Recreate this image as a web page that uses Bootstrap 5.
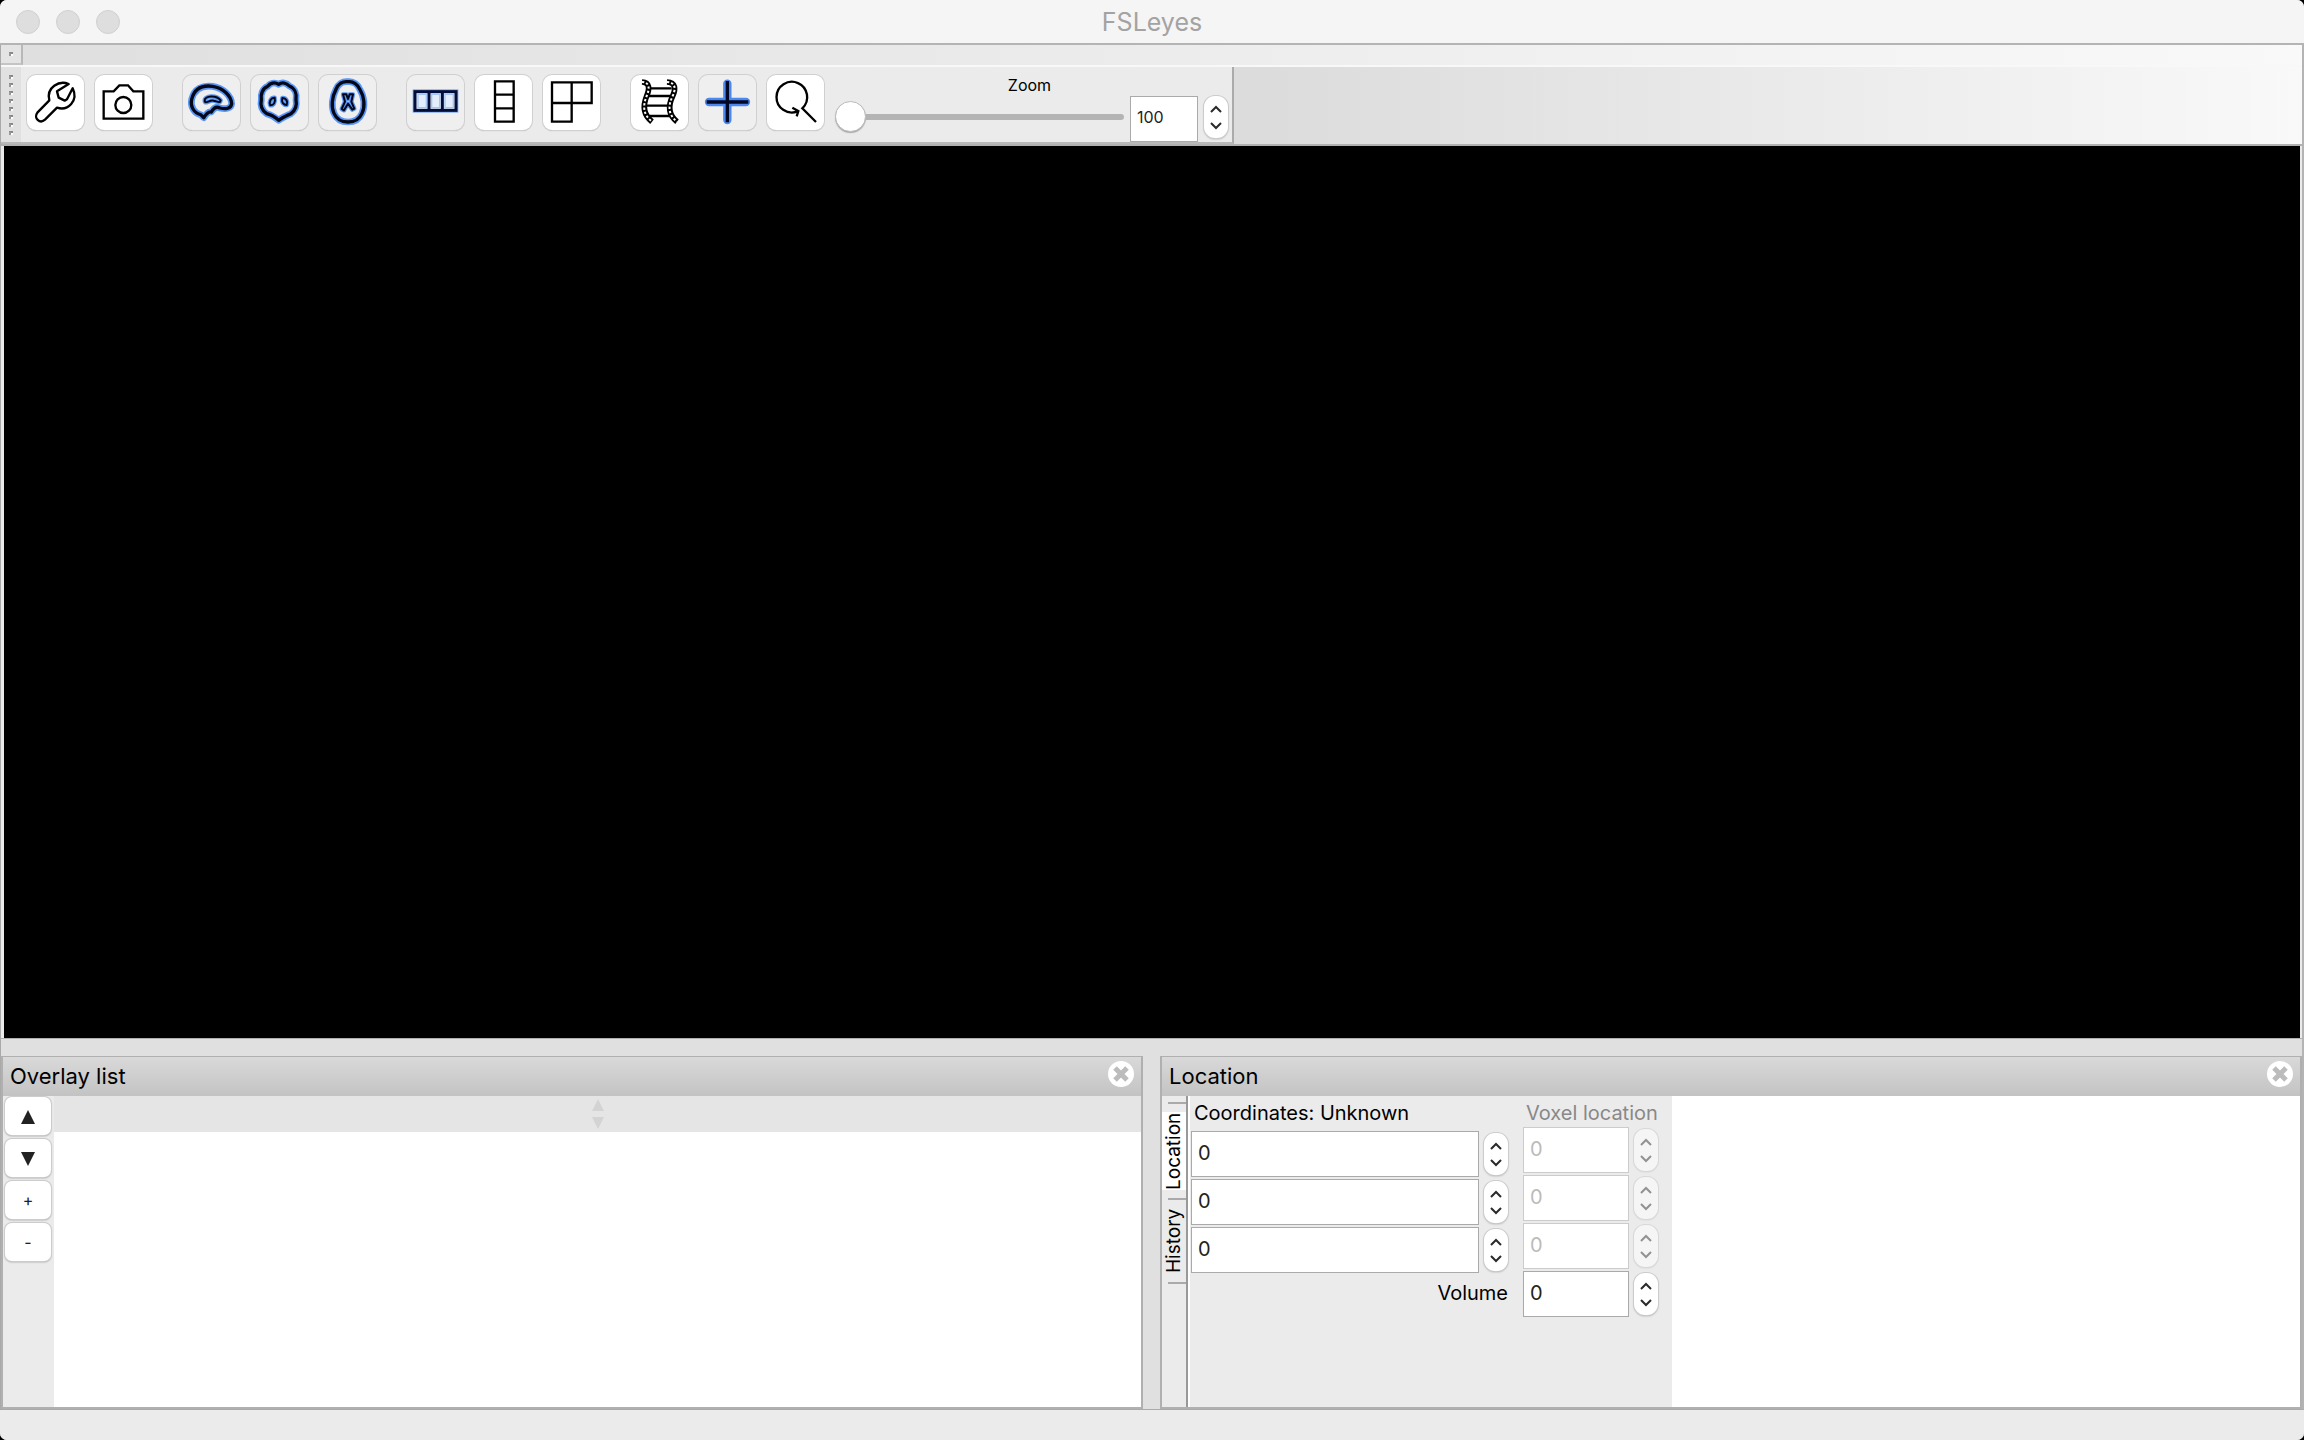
<!DOCTYPE html>
<html lang="en">
<head>
<meta charset="utf-8">
<meta name="viewport" content="width=device-width, initial-scale=1">
<title>FSLeyes</title>
<link href="https://cdn.jsdelivr.net/npm/bootstrap@5.3.0/dist/css/bootstrap.min.css" rel="stylesheet">
<style>
body{background:#000;font-family:Inter,"Liberation Sans",sans-serif;font-size:20px;line-height:24px;color:#000}
.win{min-height:100vh;background:#ebebeb;border-radius:7px;overflow:hidden}
.titlebar{height:45px;background:#f5f5f5;border-bottom:2px solid #b4b4b4}
.titlebar h1{font-size:25px;line-height:44px;color:#a3a3a3;font-weight:400}
.lights{gap:16px}
.light{width:24px;height:24px;border-radius:50%;background:#dedede;border:1px solid #d0d0d0}
.side{flex:1 1 0}
.frame{border-left:1px solid #aaa;border-right:2px solid #b4b4b4}
.strip{height:22px;background:linear-gradient(90deg,#dfdfdf,#f9f9f9);border-bottom:2px solid #f8f8f8}
.chip{width:22px;background:#e4e4e4;border-right:2px solid #b8b8b8;border-bottom:2px solid #c4c4c4}
.dot{width:4px;height:4px;background:#fff;border-top:2px solid #888;border-left:2px solid #999}
.tray{background:linear-gradient(90deg,#dcdcdc 55%,#dfdfdf 60%,#f9f9f9);border-bottom:2px solid #b0b0b0}
.tools{background:#ebebeb;border-right:2px solid #ababab;border-bottom:2px solid #b9b9b9;height:77px}
.grip{width:20px;background:#e1e1e1;padding-top:8px;gap:4px}
.tb{width:57px;height:55px;padding:0;border-radius:9px;background:#fff;border:0;box-shadow:0 0 0 1px #d0d0d0,0 1px 1px #aaa}
.tb[aria-pressed=true]{background:#efefef}
.tb svg{display:block;width:57px;height:55px}
.tbset{gap:31px;padding:8px 0 0 6px}
.tbgroup{gap:11px}
.ink{fill:none;stroke:#000;stroke-width:7}
.halo{fill:none;stroke:#5a96f5;stroke-width:20;stroke-linejoin:round;stroke-linecap:round}
.halo.thin{stroke-width:13}
.core{fill:none;stroke:#020818;stroke-width:10;stroke-linejoin:round;stroke-linecap:round}
.core.thin{stroke-width:6}
.zoomer{gap:6px;padding:0 4px 0 11px}
.slidebox{width:289px;padding-top:6px}
.slidebox label{display:block;font-size:16px;line-height:24px;padding-left:100px;text-align:center}
.slide{appearance:none;background:none;width:100%;height:32px;margin:4px 0 0}
.slide::-webkit-slider-runnable-track{height:6px;border-radius:3px;background:#b4b4b4}
.slide::-webkit-slider-thumb{appearance:none;width:31px;height:31px;border-radius:50%;background:#fff;border:1px solid #bbb;box-shadow:0 1px 1px #aaa;margin-top:-13px}
.field{height:46px;border:1px solid #aaa;border-radius:0;background:#fff;padding:0 6px 2px;font-size:20px;color:#222;min-width:0}
.field:disabled{background:#fff;border-color:#ccc;color:#bbb}
.zfield{width:68px;font-size:16px;padding:0 6px 4px}
.spin{width:24px;height:42px;flex:none;border-radius:11px;background:#fff;box-shadow:0 0 0 1px #ccc,0 1px 2px #999}
.spin button{border:0;background:none;padding:0;height:17px;width:24px;line-height:0}
.spin svg{width:12px;height:8px;fill:none;stroke:#2a2a2a;stroke-width:2}
.spin.off{background:#f5f5f5;box-shadow:0 0 0 1px #d8d8d8,0 1px 2px #ccc}
.spin.off svg{stroke:#929292}
.canvas{background:#000;margin:0 2px 0 3px}
.dock{gap:17px;padding-top:17px;background:#e0e0e0;border-top:1px solid #b0b0b0}
.pane{flex:1 1 0;min-width:0;border:2px solid #b0b0b0;border-top-width:1px;min-height:353px}
.pane-h{height:39px;background:linear-gradient(#d9d9d9,#c3c3c3);padding:0 7px}
.pane-h h2{font-size:22px;line-height:39px;font-weight:400}
.shut{border:0;padding:0;background:none;line-height:0;height:26px;margin-top:-5px}
.shut svg{width:26px;height:26px}
.acts{width:51px;padding:1px 3px 0 2px;gap:4px;background:#ebebeb}
.acts button{width:46px;height:38px;border:0;padding:0;border-radius:7px;background:#fff;box-shadow:0 0 0 1px #ccc,0 1px 2px #888;font-size:16px;line-height:36px;color:#222}
.acts svg{width:16px;height:16px;fill:#222}
.lhead{height:36px;background:#e5e5e5}
.lhead svg{width:12px;height:30px;fill:#d3d3d3;display:block}
.tabs{width:26px;padding:6px 0 0 0;background:#ebebeb;border-right:2px solid #999}
.tabs button{writing-mode:vertical-rl;transform:rotate(180deg);border:0;padding:0;background:none;width:24px;line-height:24px;font-size:19px;text-align:center}
.tabs hr{width:18px;margin:0 0 0 6px;border:0;height:2px;background:#aaa;opacity:1}
.t1{height:94px}.t2{height:82px}
.tabs .t1{background:linear-gradient(#ebebeb 8px,#fff 8px,#fff 86px,#ebebeb 86px)}
.loc{background:#ebebeb;border-left:2px solid #fff;padding-right:14px;gap:15px}
.coords{width:318px;padding-left:1px}
.vox{width:135px}
.cap{height:24px;padding-left:3px}
.vox .cap{color:#888}
.coords .cap{margin:5px 0 6px}
.vox .cap{margin:5px 0 2px}
.rows{gap:2px}
.cell{gap:5px}
.status{height:31px;background:#ebebeb;border-top:1px solid #aaa}
</style>
<script src="https://cdn.jsdelivr.net/npm/bootstrap@5.3.0/dist/js/bootstrap.bundle.min.js"></script>
</head>
<body>
<svg width="0" height="0" class="position-absolute" aria-hidden="true">
  <symbol id="up" viewBox="0 0 12 8"><path d="M1 7L6 2L11 7"/></symbol>
  <symbol id="dn" viewBox="0 0 12 8"><path d="M1 1L6 6L11 1"/></symbol>
  <symbol id="x" viewBox="0 0 26 26"><circle cx="13" cy="13" r="13" fill="#fff"/><path d="M7 7L19 19M19 7L7 19" stroke="#bcbcbc" stroke-width="5"/></symbol>
</svg>
<div class="win d-flex flex-column">
  <header class="titlebar d-flex align-items-center">
    <div class="side"><div class="lights d-flex ps-3"><span class="light"></span><span class="light"></span><span class="light"></span></div></div>
    <h1 class="m-0">FSLeyes</h1>
    <div class="side"></div>
  </header>
  <div class="frame d-flex flex-column flex-grow-1">
    <div class="strip d-flex"><div class="chip d-flex align-items-center justify-content-center"><span class="dot"></span></div></div>
    <div class="tray d-flex">
      <div class="tools d-flex" role="toolbar" aria-label="View">
        <div class="grip d-flex flex-column align-items-center"><span class="dot"></span><span class="dot"></span><span class="dot"></span><span class="dot"></span><span class="dot"></span><span class="dot"></span><span class="dot"></span><span class="dot"></span></div>
        <div class="tbset d-flex">
          <div class="tbgroup d-flex">
            <button class="tb" aria-label="Settings"><svg viewBox="83 225 171 165"><path class="ink" stroke-linejoin="round" d="M208 252C180 240 140 262 150 301L114 338C102 353 121 373 137 359L173 323C206 334 238 302 220 265L203 298L196 302L178 293L173 274Z"/></svg></button>
            <button class="tb" aria-label="Screenshot"><svg viewBox="287 225 171 165"><path class="ink" d="M313 356V274H343L360 256H386L402 274H432V356Z"/><circle class="ink" cx="372" cy="315" r="24"/></svg></button>
          </div>
          <div class="tbgroup d-flex">
            <button class="tb" aria-label="Sagittal" aria-pressed="true"><svg viewBox="551 225 171 165"><defs><path id="sag" d="M613 353L604 344C585 340 572 320 577 298C585 265 610 255 640 259C672 264 696 288 697 311C695 325 680 329 662 324C650 318 642 325 636 336C627 334 621 342 613 353Z"/><path id="sag2" d="M616 303C614 286 652 284 664 301C663 311 653 304 643 302C630 299 618 314 616 303Z"/></defs><use href="#sag" class="halo"/><use href="#sag2" class="halo thin"/><use href="#sag" class="core"/><use href="#sag2" class="core thin"/></svg></button>
            <button class="tb" aria-label="Coronal" aria-pressed="true"><svg viewBox="755 225 171 165"><defs><path id="cor" d="M838 253C825 245 812 250 805 259C790 264 783 284 786 299C782 318 790 333 802 341C815 344 828 352 838 361C850 352 862 347 875 341C889 330 893 315 890 300C893 281 886 264 870 258C861 248 848 246 838 253Z"/><path id="cor2" d="M826 293C815 292 808 305 813 316C823 317 829 307 826 293ZM849 294C860 293 867 305 862 315C853 315 845 307 849 294Z"/></defs><use href="#cor" class="halo"/><use href="#cor2" class="halo thin"/><use href="#cor" class="core"/><use href="#cor2" class="core thin"/></svg></button>
            <button class="tb" aria-label="Axial" aria-pressed="true"><svg viewBox="959 225 171 165"><defs><path id="axi" d="M1046 245C1062 243 1076 254 1082 269C1095 290 1098 320 1088 340C1080 358 1065 366 1046 366C1027 366 1012 358 1004 340C995 320 998 290 1010 268C1016 252 1030 243 1046 245Z"/><path id="axi2" d="M1031 283L1041 283L1046 297L1051 283L1061 283L1056 305L1065 326L1059 329L1046 311L1034 331L1027 327L1037 305Z"/></defs><use href="#axi" class="halo"/><use href="#axi2" class="halo thin"/><use href="#axi" class="core"/><use href="#axi2" class="core thin"/></svg></button>
          </div>
          <div class="tbgroup d-flex">
            <button class="tb" aria-label="Horizontal layout" aria-pressed="true"><svg viewBox="52 75 171 165"><rect x="69" y="118" width="137" height="70" fill="#78a8f3"/><rect x="76" y="125" width="123" height="56" fill="#e4edfb" stroke="#020d38" stroke-width="9"/><path d="M118 125V181M158 125V181" stroke="#020d38" stroke-width="9"/><path d="M85 133H110V173H85ZM126 133H150V173H126ZM166 133H191V173H166Z" fill="none" stroke="#a5c5f7" stroke-width="4"/></svg></button>
            <button class="tb" aria-label="Vertical layout"><svg viewBox="256 75 171 165"><path class="ink" d="M316 94H372V215H316ZM316 134H372M316 175H372"/></svg></button>
            <button class="tb" aria-label="Grid layout"><svg viewBox="460 75 171 165"><path class="ink" d="M487 97H606V159H487ZM487 159V215H546V97"/></svg></button>
          </div>
          <div class="tbgroup d-flex">
            <button class="tb" aria-label="Movie mode"><svg viewBox="724 75 171 165"><path class="ink" d="M781 115H846M775 138H842M767 167H837M775 198H840"/><g fill="none"><g stroke="#000" stroke-width="17"><path d="M757 96C781 97 780 117 771 138C760 165 758 192 787 215"/><path d="M832 96C858 97 859 117 849 138C836 165 833 192 862 215"/></g><g stroke="#fff" stroke-width="6" stroke-dasharray="7 6" stroke-dashoffset="-12"><path d="M757 96C781 97 780 117 771 138C760 165 758 192 787 215"/><path d="M832 96C858 97 859 117 849 138C836 165 833 192 862 215"/></g></g></svg></button>
            <button class="tb" aria-label="Show cursor" aria-pressed="true"><svg viewBox="928 75 171 165"><path d="M958 156H1069M1013 101V210" stroke="#4a87ee" stroke-width="25" stroke-linecap="round" fill="none"/><path d="M951 156H1076M1013 93V217" stroke="#020824" stroke-width="10" fill="none"/></svg></button>
            <button class="tb" aria-label="Reset zoom"><svg viewBox="1132 75 171 165"><path class="ink" d="M1224 184A46 46 0 1 1 1238 175L1279 216M1208 173L1226 183L1221 199"/></svg></button>
          </div>
        </div>
        <div class="zoomer d-flex">
          <div class="slidebox"><label for="zoom">Zoom</label><input id="zoom" class="slide d-block" type="range" min="100" max="5000" value="100"></div>
          <input class="field zfield align-self-end" aria-label="Zoom value" value="100">
          <div class="spin d-flex flex-column justify-content-center align-self-end mb-1"><button aria-label="Increase"><svg><use href="#up"/></svg></button><button aria-label="Decrease"><svg><use href="#dn"/></svg></button></div>
        </div>
      </div>
    </div>
    <main class="canvas flex-grow-1"></main>
    <div class="dock d-flex">
      <section class="pane d-flex flex-column">
        <div class="pane-h d-flex align-items-center"><h2 class="m-0 me-auto">Overlay list</h2><button class="shut" aria-label="Close overlay list"><svg><use href="#x"/></svg></button></div>
        <div class="d-flex flex-grow-1">
          <div class="acts d-flex flex-column">
            <button aria-label="Move up"><svg viewBox="0 0 16 16"><path d="M8 0L15 14H1Z"/></svg></button>
            <button aria-label="Move down"><svg viewBox="0 0 16 16"><path d="M8 14L15 0H1Z"/></svg></button>
            <button>+</button>
            <button>-</button>
          </div>
          <div class="flex-grow-1 bg-white"><div class="lhead d-flex align-items-center justify-content-center"><svg viewBox="0 0 12 30"><path d="M6 0L12 12H0ZM0 18H12L6 30Z"/></svg></div></div>
        </div>
      </section>
      <section class="pane d-flex flex-column">
        <div class="pane-h d-flex align-items-center"><h2 class="m-0 me-auto">Location</h2><button class="shut" aria-label="Close location"><svg><use href="#x"/></svg></button></div>
        <div class="d-flex flex-grow-1 bg-white">
          <div class="tabs d-flex flex-column" role="tablist"><hr><button class="t1" role="tab" aria-selected="true">Location</button><hr><button class="t2" role="tab" aria-selected="false">History</button><hr></div>
          <div class="loc d-flex">
            <div class="coords d-flex flex-column">
              <div class="cap">Coordinates: Unknown</div>
              <div class="rows d-flex flex-column">
                <div class="cell d-flex align-items-center"><input class="field flex-grow-1" aria-label="X coordinate" value="0"><div class="spin d-flex flex-column justify-content-center"><button aria-label="Increase"><svg><use href="#up"/></svg></button><button aria-label="Decrease"><svg><use href="#dn"/></svg></button></div></div>
                <div class="cell d-flex align-items-center"><input class="field flex-grow-1" aria-label="Y coordinate" value="0"><div class="spin d-flex flex-column justify-content-center"><button aria-label="Increase"><svg><use href="#up"/></svg></button><button aria-label="Decrease"><svg><use href="#dn"/></svg></button></div></div>
                <div class="cell d-flex align-items-center"><input class="field flex-grow-1" aria-label="Z coordinate" value="0"><div class="spin d-flex flex-column justify-content-center"><button aria-label="Increase"><svg><use href="#up"/></svg></button><button aria-label="Decrease"><svg><use href="#dn"/></svg></button></div></div>
              </div>
              <label class="text-end mt-2" for="vol">Volume</label>
            </div>
            <div class="vox d-flex flex-column">
              <div class="cap text-nowrap">Voxel location</div>
              <div class="rows d-flex flex-column">
                <div class="cell d-flex align-items-center"><input class="field flex-grow-1" aria-label="Voxel X" value="0" disabled><div class="spin off d-flex flex-column justify-content-center"><button aria-label="Increase" disabled><svg><use href="#up"/></svg></button><button aria-label="Decrease" disabled><svg><use href="#dn"/></svg></button></div></div>
                <div class="cell d-flex align-items-center"><input class="field flex-grow-1" aria-label="Voxel Y" value="0" disabled><div class="spin off d-flex flex-column justify-content-center"><button aria-label="Increase" disabled><svg><use href="#up"/></svg></button><button aria-label="Decrease" disabled><svg><use href="#dn"/></svg></button></div></div>
                <div class="cell d-flex align-items-center"><input class="field flex-grow-1" aria-label="Voxel Z" value="0" disabled><div class="spin off d-flex flex-column justify-content-center"><button aria-label="Increase" disabled><svg><use href="#up"/></svg></button><button aria-label="Decrease" disabled><svg><use href="#dn"/></svg></button></div></div>
                <div class="cell d-flex align-items-center"><input id="vol" class="field flex-grow-1" value="0"><div class="spin d-flex flex-column justify-content-center"><button aria-label="Increase"><svg><use href="#up"/></svg></button><button aria-label="Decrease"><svg><use href="#dn"/></svg></button></div></div>
              </div>
            </div>
          </div>
        </div>
      </section>
    </div>
  </div>
  <footer class="status"></footer>
</div>
</body>
</html>
